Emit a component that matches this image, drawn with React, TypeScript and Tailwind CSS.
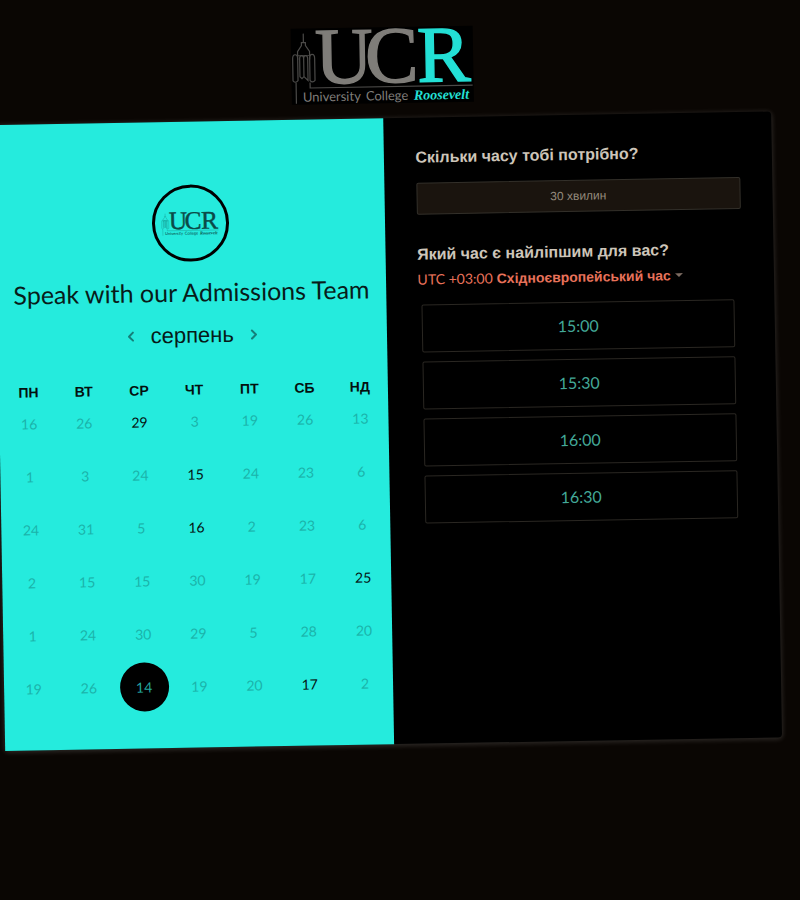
import React, { useState } from "react";
import { ChevronLeft, ChevronRight } from "lucide-react";

type LogoProps = {
  className: string;
  main: string;
  accent: string;
  line: string;
};

function Logo({ className, main, accent, line }: LogoProps) {
  return (
    <svg viewBox="0 0 182 76" overflow="visible" className={className} role="img" aria-label="University College Roosevelt">
      <g fill="none" stroke={line} strokeWidth="1.200">
        <path d="M12.500 5v9M10.500 14h4v3l4 6v4h-12v-4l4-6zM6.500 27v4M18.500 27v4" />
        <path d="M1.500 52V30q0-4 2.500-4t2.500 4v22q-2.500 3-5 0z" />
        <path d="M8.500 48V30q0-3 2-3t2 3v18l-2 2zM12.500 48V30q0-3 2-3t2 3v22l-4-4" />
        <path d="M18.500 52V30q0-4 2.500-4t2.500 4v22q-2.500 3-5 0z" />
        <path d="M4.500 54v21M18.500 54v5.500H181" />
      </g>
      <g fontFamily="'Liberation Serif', serif" fontSize="80" strokeWidth="1.400">
        <text x="24" y="55" fill={main} stroke={main}>U</text>
        <text x="74" y="55" fill={main} stroke={main}>C</text>
        <text x="126" y="55" fill={accent} stroke={accent}>R</text>
      </g>
      <g fontFamily="Lato, sans-serif" fontSize="13" fill={main}>
        <text x="11" y="73">University</text>
        <text x="74" y="73">College</text>
      </g>
      <text x="122" y="73" fontFamily="'Liberation Serif', serif" fontSize="14" fontWeight="700" fontStyle="italic" fill={accent}>
        Roosevelt
      </text>
    </svg>
  );
}

const weekdays = ["ПН", "ВТ", "СР", "ЧТ", "ПТ", "СБ", "НД"];

const weeks = [
  [16, 26, 29, 3, 19, 26, 13],
  [1, 3, 24, 15, 24, 23, 6],
  [24, 31, 5, 16, 2, 23, 6],
  [2, 15, 15, 30, 19, 17, 25],
  [1, 24, 30, 29, 5, 28, 20],
  [19, 26, 14, 19, 20, 17, 2],
];

const openDays = ["0-2", "1-3", "2-3", "3-6", "5-2", "5-5"];
const slots = ["15:00", "15:30", "16:00", "16:30"];

function Calendar() {
  const [selected, setSelected] = useState("5-2");
  return (
    <table className="w-full table-fixed border-collapse">
      <thead>
        <tr>
          {weekdays.map((day) => (
            <th key={day} scope="col" className="p-0 font-['Liberation_Sans',sans-serif] text-sm leading-[10px] font-bold text-[#04100f]">
              {day}
            </th>
          ))}
        </tr>
      </thead>
      <tbody>
        {weeks.map((week, row) => (
          <tr key={row}>
            {week.map((day, col) => {
              const key = `${row}-${col}`;
              const open = openDays.includes(key);
              const tone =
                key === selected ? "bg-black text-[#23a69e]" : open ? "text-[#04100f]" : "text-[#1bb3aa]";
              return (
                <td key={key} className="h-[53px] p-0 text-center">
                  <button
                    type="button"
                    disabled={!open}
                    onClick={() => setSelected(key)}
                    className={`inline-flex size-[49px] items-center justify-center rounded-full align-middle text-sm ${tone}`}
                  >
                    {day}
                  </button>
                </td>
              );
            })}
          </tr>
        ))}
      </tbody>
    </table>
  );
}

export default function App() {
  return (
    <div className="min-h-screen overflow-hidden bg-[#0a0603] font-[Lato,'Liberation_Sans',sans-serif]">
      <main className="min-h-screen -rotate-1 pt-[27px] pr-[23px]">
        <header className="mb-[15px] flex justify-center">
          <Logo className="h-[76px] w-[182px] bg-black" main="#7f7d79" accent="#23e0d6" line="#4b4a48" />
        </header>

        <div className="grid grid-cols-2 rounded-sm bg-black shadow-[0_1px_5px_1px_rgba(255,255,255,0.14)]">
          <section className="bg-[#25ebdd] pt-[63px] pb-[35px]">
            <div className="mx-auto flex size-[77px] items-center justify-center rounded-full border-3 border-black">
              <Logo className="h-6 w-[58px]" main="#0b4a47" accent="#0b4a47" line="#168f88" />
            </div>
            <h1 className="mt-3 text-center text-[25px] leading-9 text-[#081c1a]">Speak with our Admissions Team</h1>
            <div className="mt-2.5 mb-[33px] flex h-8 items-center justify-center gap-3">
              <button type="button" aria-label="Попередній місяць" className="text-[#14807a]">
                <ChevronLeft size={16} strokeWidth={3} />
              </button>
              <h2 className="font-['Liberation_Sans',sans-serif] text-[22px] leading-8 text-[#061a18]">серпень</h2>
              <button type="button" aria-label="Наступний місяць" className="text-[#14807a]">
                <ChevronRight size={16} strokeWidth={3} />
              </button>
            </div>
            <div className="pl-0.5">
              <Calendar />
            </div>
          </section>

          <section className="px-8 pt-7">
            <h2 className="font-['Liberation_Sans',sans-serif] text-base leading-6 font-bold text-[#cdc5b9]">
              Скільки часу тобі потрібно?
            </h2>
            <button
              type="button"
              className="mt-[13px] block h-8 w-full rounded-xs border border-[#33302a] bg-[#1a140e] font-['Liberation_Sans',sans-serif] text-xs text-[#948a7c]"
            >
              30 хвилин
            </button>
            <h2 className="mt-7 font-['Liberation_Sans',sans-serif] text-base leading-6 font-bold text-[#cdc5b9]">
              Який час є найліпшим для вас?
            </h2>
            <button type="button" aria-haspopup="listbox" className="flex h-[26px] items-center gap-1 text-sm text-[#e8725a]">
              <span>UTC +03:00</span>
              <span className="font-['Liberation_Sans',sans-serif] font-bold">Східноєвропейський час</span>
              <svg viewBox="0 0 8 4" className="h-1 w-2" aria-hidden="true">
                <path d="M0 0h8L4 4z" fill="#7d6c62" />
              </svg>
            </button>
            <div className="mt-3 mr-2 ml-[3px] flex flex-col gap-[9px]">
              {slots.map((slot) => (
                <button
                  key={slot}
                  type="button"
                  className="h-12 rounded-xs border border-[#2a2722] text-base text-[#43a998]"
                >
                  {slot}
                </button>
              ))}
            </div>
          </section>
        </div>
      </main>
    </div>
  );
}
